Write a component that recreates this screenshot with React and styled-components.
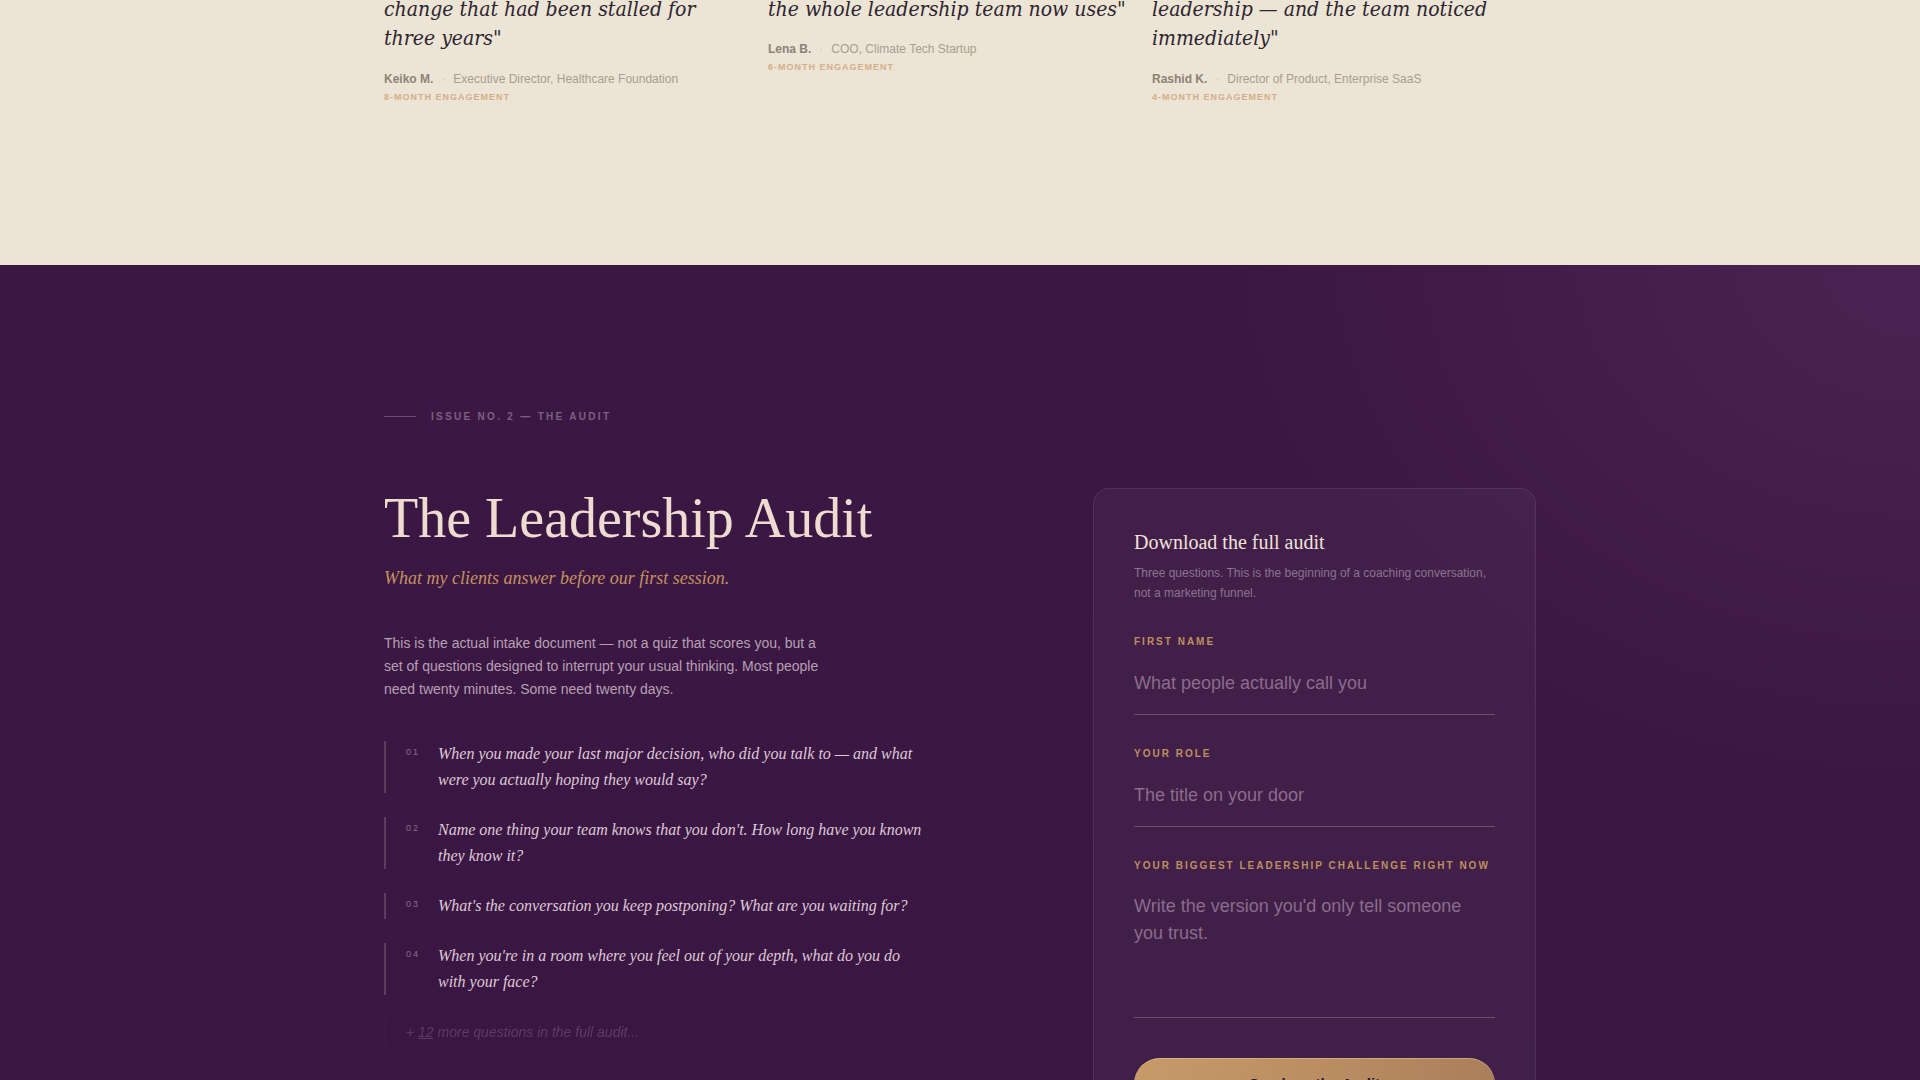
import styled, { createGlobalStyle } from "styled-components";

const GlobalStyle = createGlobalStyle`
    * { box-sizing: border-box; }
    body {
        margin: 0;
        background: #3a1742;
        font-family: "Liberation Sans", Arial, sans-serif;
    }
`;

const testimonials = [
    {
        quote: "change that had been stalled for three years\"",
        name: "Keiko M.",
        role: "Executive Director, Healthcare Foundation",
        length: "8-Month Engagement",
    },
    {
        quote: "the whole leadership team now uses\"",
        name: "Lena B.",
        role: "COO, Climate Tech Startup",
        length: "6-Month Engagement",
    },
    {
        quote: "leadership \u2014 and the team noticed immediately\"",
        name: "Rashid K.",
        role: "Director of Product, Enterprise SaaS",
        length: "4-Month Engagement",
    },
];

const questions = [
    "When you made your last major decision, who did you talk to \u2014 and what were you actually hoping they would say?",
    "Name one thing your team knows that you don't. How long have you known they know it?",
    "What's the conversation you keep postponing? What are you waiting for?",
    "When you're in a room where you feel out of your depth, what do you do with your face?",
];

const App = () => {
    return (
        <>
            <GlobalStyle />
            <Testimonials>
                <Container>
                    <TestimonialGrid>
                        {testimonials.map((t) => (
                            <Testimonial key={t.name}>
                                <Quote>{t.quote}</Quote>
                                <Meta>
                                    <Name>{t.name}</Name>
                                    <Dot>·</Dot>
                                    <Role>{t.role}</Role>
                                </Meta>
                                <Engagement>{t.length}</Engagement>
                            </Testimonial>
                        ))}
                    </TestimonialGrid>
                </Container>
            </Testimonials>

            <Audit>
                <Container>
                    <Eyebrow>
                        <Rule />
                        Issue No. 2 — The Audit
                    </Eyebrow>
                    <AuditGrid>
                        <Intro>
                            <Title>The Leadership Audit</Title>
                            <Subtitle>What my clients answer before our first session.</Subtitle>
                            <Lead>
                                This is the actual intake document — not a quiz that scores you, but a
                                set of questions designed to interrupt your usual thinking. Most people
                                need twenty minutes. Some need twenty days.
                            </Lead>
                            <QuestionList>
                                {questions.map((q, i) => (
                                    <Question key={i}>
                                        <Number>0{i + 1}</Number>
                                        <QuestionText>{q}</QuestionText>
                                    </Question>
                                ))}
                                <Question $faded>
                                    <MoreText>+ <u>12</u> more questions in the full audit...</MoreText>
                                </Question>
                            </QuestionList>
                        </Intro>

                        <Card>
                            <CardTitle>Download the full audit</CardTitle>
                            <CardText>
                                Three questions. This is the beginning of a coaching conversation,
                                not a marketing funnel.
                            </CardText>
                            <Form onSubmit={(e) => e.preventDefault()}>
                                <Field>
                                    <Label>First Name</Label>
                                    <Input placeholder="What people actually call you" />
                                </Field>
                                <Field>
                                    <Label>Your Role</Label>
                                    <Input placeholder="The title on your door" />
                                </Field>
                                <Field>
                                    <Label>Your Biggest Leadership Challenge Right Now</Label>
                                    <TextArea placeholder="Write the version you'd only tell someone you trust." />
                                </Field>
                                <Submit type="submit">Send me the Audit</Submit>
                            </Form>
                        </Card>
                    </AuditGrid>
                </Container>
            </Audit>
        </>
    );
};

export default App;

const Container = styled.div`
    width: 1152px;
    margin: 0 auto;
`;

const Testimonials = styled.section`
    background: #ece4d4;
    padding-bottom: 163px;
`;

const TestimonialGrid = styled.div`
    display: grid;
    grid-template-columns: repeat(3, 360px);
    column-gap: 24px;
`;

const Testimonial = styled.div`
    display: flex;
    flex-direction: column;
`;

const Quote = styled.p`
    margin: -5px 0 0;
    font-family: "DejaVu Serif", "Liberation Serif", serif;
    font-stretch: condensed;
    font-style: italic;
    font-size: 21px;
    line-height: 1.4;
    color: #2d2430;
`;

const Meta = styled.div`
    display: flex;
    align-items: center;
    gap: 8px;
    margin-top: 16px;
    font-size: 12px;
    line-height: 18px;
`;

const Name = styled.span`
    font-weight: 700;
    color: #8d8277;
`;

const Dot = styled.span`
    color: #d3c9bb;
`;

const Role = styled.span`
    color: #a89d91;
`;

const Engagement = styled.span`
    margin-top: 4px;
    font-size: 9px;
    font-weight: 700;
    letter-spacing: 1px;
    text-transform: uppercase;
    color: #d3af8a;
`;

const Audit = styled.section`
    min-height: 900px;
    padding: 146px 0 120px;
    background:
        radial-gradient(ellipse 1000px 760px at 100% 0%, rgba(92, 48, 98, 0.5), transparent 70%),
        linear-gradient(180deg, #3b1743 0%, #3a1742 100%);
`;

const Eyebrow = styled.div`
    display: flex;
    align-items: center;
    gap: 15px;
    font-size: 10px;
    line-height: 12px;
    font-weight: 700;
    letter-spacing: 2.3px;
    text-transform: uppercase;
    color: #7c6080;
`;

const Rule = styled.span`
    width: 32px;
    height: 1px;
    background: #6c4e70;
`;

const AuditGrid = styled.div`
    display: grid;
    grid-template-columns: 1fr 443px;
    gap: 96px;
    margin-top: 65px;
    align-items: start;
`;

const Intro = styled.div`
    display: flex;
    flex-direction: column;
`;

const Title = styled.h2`
    margin: 0;
    font-family: "Liberation Serif", "Times New Roman", serif;
    font-weight: 400;
    font-size: 56px;
    line-height: 1.1;
    color: #eedcd0;
`;

const Subtitle = styled.p`
    margin: 16px 0 0;
    font-family: "Liberation Serif", "Times New Roman", serif;
    font-style: italic;
    font-size: 18px;
    line-height: 27px;
    color: #c4925f;
`;

const Lead = styled.p`
    margin: 40px 0 0;
    max-width: 440px;
    font-size: 14px;
    line-height: 23px;
    color: #b7a0b4;
`;

const QuestionList = styled.ol`
    list-style: none;
    margin: 40px 0 0;
    padding: 0;
    max-width: 540px;
    display: flex;
    flex-direction: column;
    gap: 24px;
`;

const Question = styled.li`
    display: flex;
    align-items: flex-start;
    gap: 16px;
    padding-left: 20px;
    border-left: 2px solid ${(p) => (p.$faded ? "rgba(110, 74, 104, 0.35)" : "#5f3c5d")};
    opacity: ${(p) => (p.$faded ? 0.2 : 1)};
    filter: ${(p) => (p.$faded ? "blur(0.7px)" : "none")};
`;

const Number = styled.span`
    flex: 0 0 16px;
    font-size: 9px;
    line-height: 22px;
    letter-spacing: 2px;
    color: #8c6c88;
`;

const QuestionText = styled.p`
    margin: 0;
    font-family: "Liberation Serif", "Times New Roman", serif;
    font-style: italic;
    font-size: 16px;
    line-height: 26px;
    color: #dfc9d7;
`;

const MoreText = styled.p`
    margin: 0;
    font-style: italic;
    font-size: 14px;
    line-height: 26px;
    color: #dfc9d7;
`;

const Card = styled.div`
    padding: 40px;
    border-radius: 16px;
    border: 1px solid rgba(255, 255, 255, 0.08);
    background: rgba(255, 255, 255, 0.035);
`;

const CardTitle = styled.h3`
    margin: 0;
    font-family: "Liberation Serif", "Times New Roman", serif;
    font-weight: 400;
    font-size: 20px;
    line-height: 26px;
    color: #f2e2dc;
`;

const CardText = styled.p`
    margin: 8px 0 0;
    font-size: 12px;
    line-height: 20px;
    color: #8c7290;
`;

const Form = styled.form`
    display: flex;
    flex-direction: column;
    gap: 32px;
    margin-top: 32px;
`;

const Field = styled.label`
    display: flex;
    flex-direction: column;
    gap: 10px;
`;

const Label = styled.span`
    font-size: 10px;
    line-height: 14px;
    font-weight: 700;
    letter-spacing: 2px;
    text-transform: uppercase;
    color: #bf8f60;
`;

const Input = styled.input`
    width: 100%;
    padding: 11px 0 17px;
    border: 0;
    border-bottom: 1px solid #6e4f72;
    background: transparent;
    font-family: "Liberation Sans", Arial, sans-serif;
    font-size: 18px;
    line-height: 27px;
    color: #eedcd0;
    outline: none;

    &::placeholder {
        color: #8b6c8c;
    }
`;

const TextArea = styled.textarea`
    width: 100%;
    height: 135px;
    padding: 10px 12px 16px 0;
    border: 0;
    border-bottom: 1px solid #6e4f72;
    background: transparent;
    font-family: "Liberation Sans", Arial, sans-serif;
    font-size: 18px;
    line-height: 27px;
    color: #eedcd0;
    resize: none;
    outline: none;

    &::placeholder {
        color: #8b6c8c;
    }
`;

const Submit = styled.button`
    margin-top: 8px;
    height: 52px;
    border: 0;
    border-radius: 26px;
    background: linear-gradient(100deg, #c89a68 0%, #b98d62 55%, #a87f5a 100%);
    box-shadow: inset 0 1px 0 rgba(255, 230, 190, 0.35);
    font-family: "Liberation Sans", Arial, sans-serif;
    font-size: 15px;
    font-weight: 700;
    color: #2b1530;
    cursor: pointer;
`;
